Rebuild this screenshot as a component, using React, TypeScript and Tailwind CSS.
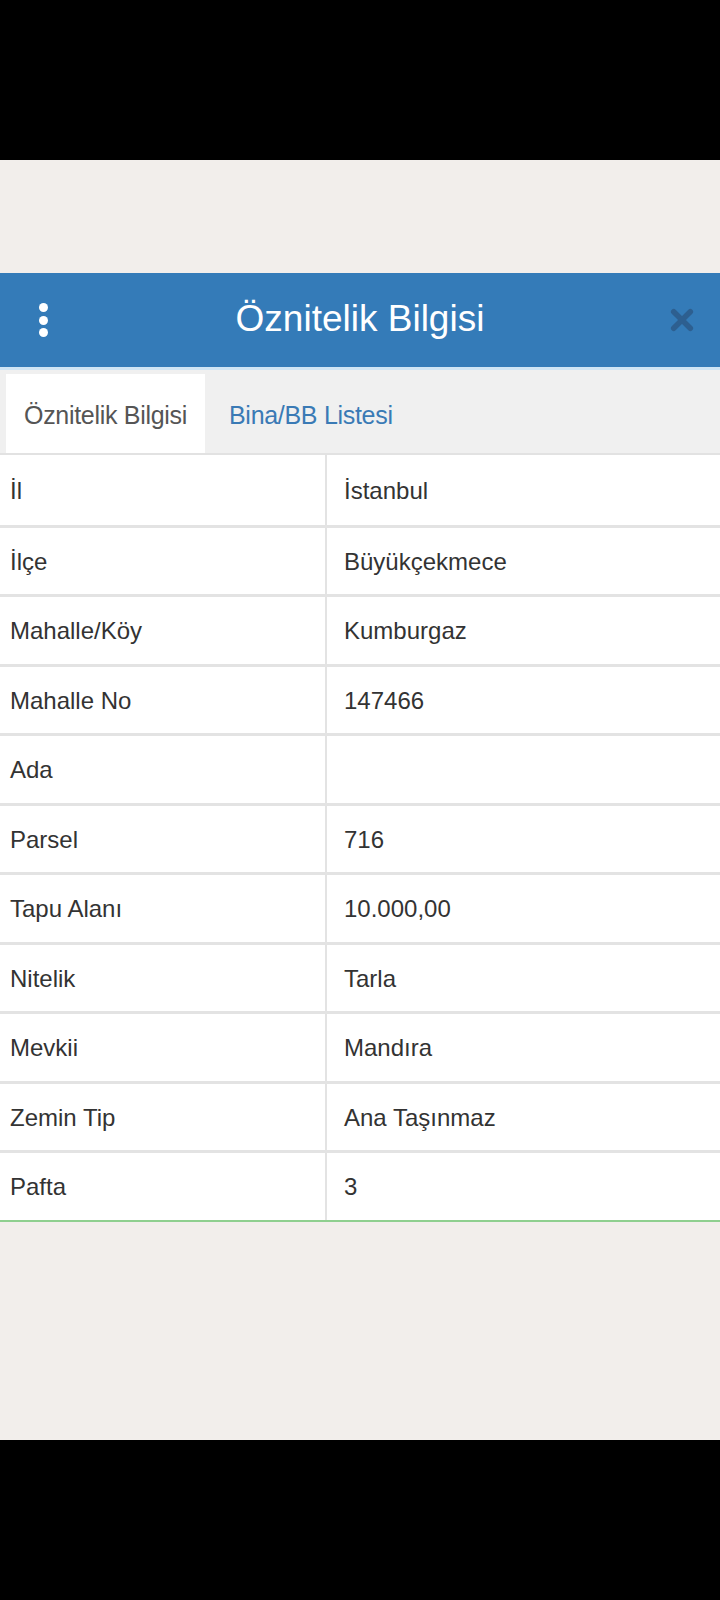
const rows: [string, string][] = [
  ['İl', 'İstanbul'],
  ['İlçe', 'Büyükçekmece'],
  ['Mahalle/Köy', 'Kumburgaz'],
  ['Mahalle No', '147466'],
  ['Ada', ''],
  ['Parsel', '716'],
  ['Tapu Alanı', '10.000,00'],
  ['Nitelik', 'Tarla'],
  ['Mevkii', 'Mandıra'],
  ['Zemin Tip', 'Ana Taşınmaz'],
  ['Pafta', '3'],
];

export default function App() {
  return (
    <div className="w-[720px] h-[1600px] flex flex-col bg-[#f2eeeb] font-['Liberation_Sans',Arial,sans-serif]">
      <div className="h-[160px] bg-black shrink-0" />
      <div className="h-[113px] shrink-0" />

      {/* header */}
      <div className="h-[94px] shrink-0 bg-[#347bb8] flex items-center">
        <div className="w-[86px] flex flex-col items-center gap-[3.5px]">
          <span className="w-[9px] h-[9px] rounded-full bg-white" />
          <span className="w-[9px] h-[9px] rounded-full bg-white" />
          <span className="w-[9px] h-[9px] rounded-full bg-white" />
        </div>
        <div className="flex-1 text-center text-white text-[37px] leading-none -mt-[4px]">Öznitelik Bilgisi</div>
        <div className="w-[86px] flex justify-center pl-[10px]">
          <svg width="24" height="24" viewBox="0 0 26 26">
            <path d="M4 4 L22 22 M22 4 L4 22" stroke="#2d5f90" strokeWidth="6" strokeLinecap="round" />
          </svg>
        </div>
      </div>

      {/* tabs */}
      <div className="h-[88px] shrink-0 bg-[#f0f0f0] border-t-[3px] border-[#cfe5f5] flex items-end px-[6px] border-b-2 border-b-[#e2e2e2]">
        <div className="w-[199px] h-[79px] bg-white flex items-center justify-center pt-[4px] text-[25px] text-[#555] tracking-[-0.3px]">
          Öznitelik Bilgisi
        </div>
        <div className="h-[79px] flex items-center pl-[24px] pt-[4px] text-[25px] text-[#3a7ab5] tracking-[-0.3px]">Bina/BB Listesi</div>
      </div>

      {/* table */}
      <div className="bg-white border-b-2 border-[#8fcf8f] shrink-0">
        {rows.map(([k, v], i) => (
          <div
            key={k}
            className={`flex h-[69.5px] text-[24px] text-[#333] ${i > 0 ? 'border-t-[3px] border-[#e3e3e3]' : ''}`}
          >
            <div className="w-[327px] border-r-2 border-[#e3e3e3] flex items-center pl-[10px] pt-[2px]">{k}</div>
            <div className="flex-1 flex items-center pl-[17px] pt-[2px]">{v}</div>
          </div>
        ))}
      </div>

      <div className="flex-1" />
      <div className="h-[160px] bg-black shrink-0" />
    </div>
  );
}
